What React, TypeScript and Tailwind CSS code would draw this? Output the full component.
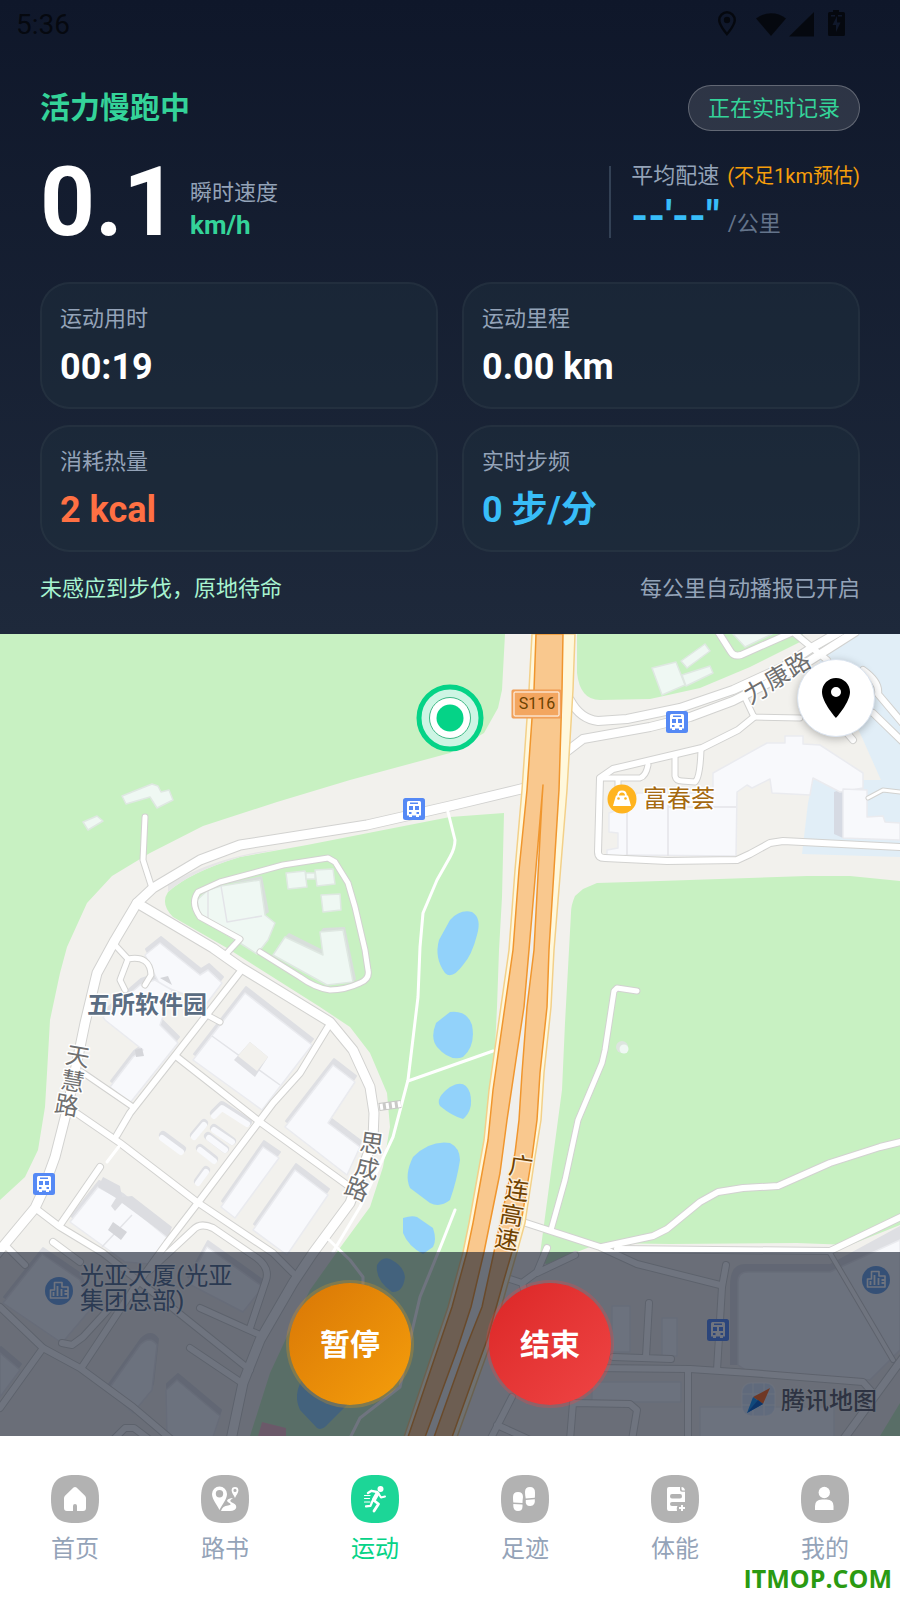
import type { ReactNode } from "react";
import { MdLocationOn } from "react-icons/md";

const metrics = [
  { label: "运动用时", value: "00:19", color: "text-white" },
  { label: "运动里程", value: "0.00 km", color: "text-white" },
  { label: "消耗热量", value: "2 kcal", color: "text-[#ff7043]" },
  { label: "实时步频", value: "0 步/分", color: "text-[#38bdf8]" },
];

function StatusBar() {
  return (
    <div className="flex h-12 items-center justify-between pt-0.5 pl-4 text-black/65">
      <span className="text-[28px] leading-none">5:36</span>
      <svg viewBox="0 0 130 30" className="mr-[54px] h-[30px] w-[130px]" fill="currentColor" aria-hidden="true">
        <path
          fillRule="evenodd"
          d="M11 1a9 9 0 0 1 9 9c0 6-9 16-9 16S2 16 2 10a9 9 0 0 1 9-9Zm0 2.500a6.500 6.500 0 0 0-6.500 6.500c0 3.500 3.500 8.500 6.500 12.300 3-3.800 6.500-8.800 6.500-12.300A6.500 6.500 0 0 0 11 3.500Z"
        />
        <circle cx="11" cy="10" r="3.200" />
        <path d="M40 8.500a24 24 0 0 1 30 0L55 26Z" />
        <path d="M98 2V26.500H73Z" />
        <path
          fillRule="evenodd"
          d="M117 0h6v2h4.500q1.500 0 1.500 1.500v21q0 1.500-1.500 1.500h-14q-1.500 0-1.500-1.500v-21q0-1.500 1.500-1.500h3.500Zm4 6-4.500 9h3.500v7l4.500-9.500h-3.500ZM115 5v1.500h4V5Zm7 0v1.500h4V5Z"
        />
      </svg>
    </div>
  );
}

function Dashboard() {
  return (
    <header className="bg-linear-to-b from-[#0f172a] to-[#1e293b]">
      <StatusBar />
      <div className="px-10 pt-[37px] pb-[29px]">
        <div className="flex h-[46px] items-center justify-between">
          <h1 className="text-[30px] leading-none font-bold text-[#34d399]">活力慢跑中</h1>
          <span className="flex h-full items-center rounded-full border border-white/25 bg-white/12 px-[19px] text-[22px] text-[#34d399]">
            正在实时记录
          </span>
        </div>

        <div className="mt-[35px] flex h-[72px] justify-between">
          <div className="flex gap-3">
            <span className="text-[96px] leading-[72px] font-bold text-white">0.1</span>
            <div className="-mb-px flex flex-col gap-1 self-end">
              <span className="text-[22px] leading-7 text-[#94a3b8]">瞬时速度</span>
              <span className="text-[26px] leading-7 font-bold text-[#34d399]">km/h</span>
            </div>
          </div>
          <div className="flex flex-col gap-1 border-l-2 border-[#334155] pl-5">
            <div className="flex items-center gap-2 leading-5">
              <span className="text-[22px] text-[#94a3b8]">平均配速</span>
              <span className="text-[20px] text-[#f59e0b]">(不足1km预估)</span>
            </div>
            <div className="flex items-baseline gap-2 leading-[52px]">
              <span className="text-[43px] font-bold text-[#38bdf8]">--'--"</span>
              <span className="text-[22px] text-[#64748b]">/公里</span>
            </div>
          </div>
        </div>

        <dl className="mt-11 grid grid-cols-2 gap-x-6 gap-y-4">
          {metrics.map((m) => (
            <div key={m.label} className="rounded-[30px] border-2 border-white/4 bg-[#1e2d3b]/50 px-[18px] pt-[19px] pb-4">
              <dt className="text-[22px] leading-8 text-[#94a3b8]">{m.label}</dt>
              <dd className={`mt-2 text-[36px] leading-[48px] font-bold ${m.color}`}>{m.value}</dd>
            </div>
          ))}
        </dl>

        <div className="mt-[21px] flex justify-between text-[22px] leading-8">
          <span className="text-[#a7f3d0]">未感应到步伐，原地待命</span>
          <span className="text-[#94a3b8]">每公里自动播报已开启</span>
        </div>
      </div>
    </header>
  );
}

const greens = [
  "M0 634H505L502 690 498 708 484 733 450 753 350 780 277 802 203 826 150 853 112 876 87 903 77 925 67 947 60 973 50 1020 47 1073 45 1107 38 1150 25 1177 0 1200Z",
  "M504 813 450 817 307 845 240 857Q190 872 168 892 160 904 173 917L227 948 320 1007 350 1027 370 1053 387 1093 390 1127 383 1167 370 1207 337 1252 310 1290 290 1330 270 1373 250 1436H404L433 1350 450 1307 463 1257 487 1140 493 1090 497 1007 499 950 502 897Z",
  "M577 634V673Q580 700 600 700L650 699 700 688 750 667 800 642 803 634Z",
  "M900 881 850 876H807L630 882 597 883 583 889 575 896Q571 905 571 913L569 950 565 1023 562 1090 553 1157 545 1217 539 1262 547 1264 577 1252 600 1243 670 1244 797 1243 850 1245 900 1225Z",
  "M900 1403 880 1436H900Z",
];

const ponds = [
  "M450 920Q460 909 472 912 482 918 477 935 472 955 463 965 452 980 445 973 434 958 439 940Z",
  "M450 1012Q467 1010 472 1025 476 1046 463 1057 450 1062 437 1047 430 1038 436 1023Z",
  "M450 1087Q465 1078 470 1093 474 1110 463 1119 452 1116 440 1106 435 1098 450 1087Z",
  "M450 1143Q430 1140 413 1157 404 1175 410 1188L430 1203Q440 1208 450 1200 457 1180 460 1160 460 1148 450 1143Z",
  "M403 1218Q412 1215 417 1217L433 1228Q437 1240 433 1247L423 1254Q408 1246 403 1233Z",
  "M377 1265Q382 1256 390 1259 404 1266 405 1277 403 1293 392 1292 375 1280 377 1265Z",
  "M302 1380Q293 1395 300 1410L317 1428Q322 1431 328 1424L347 1405 330 1380Z",
];

const greenBuildings = [
  "M122 796 152 784 158 786 161 792 169 790 173 800 157 808 150 797 126 804Z",
  "M83 822 97 816 103 821 88 830Z",
  "M286 873 305 871 307 887 288 889Z",
  "M306 873H315V879H306Z",
  "M315 870 333 869 335 884 317 886Z",
  "M321 895 340 894 341 910 323 912Z",
  "M197 900 208 890 221 886 260 880 265 915 275 923 268 940 257 954 243 945 200 917Z",
  "M285 937 323 955 320 932 343 930 353 982 327 985 273 955Z",
  "M652 668 676 662 685 685 662 695Z",
  "M682 675 710 666 713 673 686 686Z",
  "M681 661 705 644 710 651 687 668Z",
  "M733 634 745 647 772 634Z",
];

const buildings = [
  "M145 955 160 943 200 975 208 970 222 983 207 1003 160 985Z",
  "M103 1017 140 985 155 980 172 990 160 1025 178 1043 130 1103 110 1087 133 1057 143 1050 105 1020Z",
  "M245 993 312 1045 262 1110 193 1060Z",
  "M333 1065 355 1082 328 1123 360 1147 347 1175 285 1127Z",
  "M263 1147 279 1158 235 1218 221 1207Z",
  "M295 1170 328 1195 287 1255 253 1230Z",
  "M98 1187 117 1197 122 1200 170 1240 150 1264 125 1262 70 1222Z",
  "M207 1247 263 1287 243 1312 187 1283Z",
  "M42 1254 80 1280 90 1310 62 1343 3 1303Z",
  "M140 1345Q150 1335 157 1345L152 1390 133 1413 108 1390Z",
  "M177 1380 220 1416 212 1440H167L166 1390Z",
  "M0 1353 20 1370 0 1397Z",
  "M713 773 767 743H785V736H803V744L820 745 863 773V788L840 792 813 778 810 795 772 793 770 779 752 788 747 785 737 792 736 856 627 855 607 860V850L618 848V833L609 832V813L627 807 637 793H713Z",
  "M843 789 867 790V817L883 816 885 822 900 823V840L843 838Z",
  "M738 1282Q738 1272 748 1272H830L900 1240V1350L870 1380 750 1373 738 1365Z",
  "M612 1306H630V1352H612Z",
  "M662 1318H677V1356H662Z",
  "M592 1382H681V1402H592Z",
  "M700 1407H834V1440H700Z",
];

// [path, width]
const roads: [string, number][] = [
  ["M145 817 143 860 151 885", 5],
  ["M227 953 240 939 200 917Q190 903 198 892L220 882 283 865 328 858 335 862 348 883 355 907 365 950 368 970Q370 979 360 983 345 990 330 990 315 988 300 977L260 952", 5],
  ["M240 972 177 1053 130 1113 117 1135", 6],
  ["M207 1015 220 1022", 5],
  ["M115 945 128 959 120 980 125 990M128 959Q150 955 151 975L145 985", 5],
  ["M82 1072 133 1107", 5],
  ["M72 1110 120 1143 197 1202 273 1253 293 1273", 6],
  ["M177 1057 260 1122 350 1187", 6],
  ["M328 1027 300 1073 273 1103 200 1200 167 1243 133 1290 82 1367", 6],
  ["M35 1208 60 1227 103 1253 150 1290 250 1370", 6],
  ["M60 1225 100 1167", 6],
  ["M150 1270 193 1230Q200 1222 213 1228L257 1258Q270 1268 266 1280L250 1328", 6],
  ["M53 1242 80 1262", 6],
  ["M5 1245 25 1265", 6],
  ["M0 1307 43 1348 80 1368 133 1407 172 1440", 6],
  ["M43 1348 0 1408", 6],
  ["M190 1348 242 1383", 6],
  ["M200 1308 260 1335", 6],
  ["M62 1343 72 1345 83 1337 117 1300", 6],
  ["M113 1440 125 1428H134L150 1440", 6],
  ["M137 903 213 948 240 967 330 1022 353 1050 370 1087 374 1113 373 1140 350 1203 313 1253 293 1283 260 1340 243 1383 231 1440", 9],
  ["M525 788 450 806 367 825 240 845 200 860 153 888 137 903 115 940 97 973 85 1023 67 1110 55 1157 42 1193 35 1208 -10 1262", 9],
  ["M717 630 731 652Q734 657 741 655L793 632 827 660", 6],
  ["M745 698 754 717 800 718", 5],
  ["M754 717 738 730 702 748 613 769 600 778 598 852Q598 858 605 858L667 861 737 860 750 854 770 843 783 841 900 847", 6],
  ["M600 778H640Q646 776 648 765M675 755V776Q676 781 682 781L695 782Q700 778 701 750M618 780V792", 5],
  ["M863 670Q880 682 878 694L905 726M873 713 905 744M847 733 853 740", 6],
  ["M868 798 883 790 900 792", 3],
  ["M570 700Q580 719 598 721L627 719 680 708 733 690 783 667 813 647 860 620", 8],
  ["M566 752 583 739 650 727 690 717 733 701 800 667 855 632", 8],
  ["M637 991 617 988 614 991 605 1050 602 1063 578 1120 565 1180 551 1230", 5],
  ["M523 1222 600 1247 637 1264 720 1285", 6],
  ["M602 1247 653 1236 667 1229 700 1202 718 1192 743 1188 778 1186 830 1163 880 1147 905 1141", 6],
  ["M617 1249 830 1251 905 1215", 6],
  ["M830 1253 893 1360", 4],
  ["M726 1265 722 1287 717 1370", 6],
  ["M590 1368 690 1369 750 1373 863 1382 872 1392", 6],
  ["M905 1355 843 1440", 7],
  ["M688 1370V1440", 6],
  ["M649 1303 646 1357M613 1357 671 1359", 6],
  ["M570 1440 573 1403 630 1404 637 1410 632 1440", 6],
  ["M512 1397 490 1440M497 1425 530 1440", 6],
  ["M547 1248 537 1272 522 1283 507 1278M575 1255 537 1273M522 1283 526 1296", 6],
];

const footpaths = [
  "M447 808 455 840Q455 848 450 857L437 880 423 913 420 947 418 997 408 1080 393 1137 360 1207 333 1252",
  "M408 1081 493 1051",
  "M326 1237 350 1260 363 1277V1284",
  "M455 1210 442 1243 420 1297 413 1327 400 1387 360 1418 349 1440",
  "M107 1162 120 1145",
];

function BusStop({ x, y }: { x: number; y: number }) {
  return (
    <g transform={`translate(${x - 11} ${y - 11})`}>
      <rect width="22" height="22" rx="2.500" fill="#5589f5" />
      <path
        fillRule="evenodd"
        fill="#fff"
        d="M5.500 3h11q1.500 0 1.500 1.500v13H16V19h-3v-1.500H9V19H6v-1.500H4v-13Q4 3 5.500 3ZM7 4.500V6h8V4.500ZM6 8v4h4V8Zm6 0v4h4V8ZM6 14v2h2.500v-2Zm7.500 0v2H16v-2Z"
      />
    </g>
  );
}

function OfficePin({ x, y }: { x: number; y: number }) {
  return (
    <g transform={`translate(${x} ${y})`}>
      <circle r="14" fill="#6fa6e8" />
      <path d="M-8.500 7V-1h4v-7.500H3V-4h6V7Z" fill="none" stroke="#fff" strokeWidth="1.600" />
      <path d="M-5.500 5V1M-1.500 5V-5M2.500 5V-2M5.500 0H9M5.500 3H9" stroke="#fff" strokeWidth="1.800" />
    </g>
  );
}

type Glyph = [char: string, x: number, y: number, angle: number];

function RoadName({ glyphs, fill, halo }: { glyphs: Glyph[]; fill: string; halo: string }) {
  return (
    <g fontSize="24" fill={fill} stroke={halo} strokeWidth="3" paintOrder="stroke" textAnchor="middle">
      {glyphs.map(([char, x, y, angle]) => (
        <text key={char} x="0" y="9" transform={`translate(${x} ${y}) rotate(${angle})`}>
          {char}
        </text>
      ))}
    </g>
  );
}

function MapCanvas() {
  return (
    <svg
      viewBox="0 634 900 802"
      preserveAspectRatio="xMidYMid slice"
      className="absolute inset-0 h-full w-full"
      strokeLinejoin="round"
      role="img"
      aria-label="地图"
    >
      <rect y="600" width="900" height="900" fill="#f2f1ed" />
      <path d="M853 634H900V857L802 854 808 803 813 780H881L860 733 817 657Z" fill="#e1eef7" />
      {greens.map((d) => (
        <path key={d} d={d} fill="#c8f1c2" />
      ))}
      <path d="M168 892Q190 872 240 857L280 849Q215 856 168 885Z" fill="#e6e6e6" />
      {ponds.map((d) => (
        <path key={d} d={d} fill="#92d2fa" />
      ))}
      <path d="M262 1422 286 1428V1440H257Z" fill="#f6bcc8" />

      <g fill="#dedfe3" stroke="#dedfe3" strokeWidth="2">
        {buildings.slice(0, 12).map((d) => (
          <path key={d} d={d} transform="translate(1 -6)" />
        ))}
      </g>
      <path d="M730 1285Q730 1264 745 1264H830L900 1226V1240L830 1272H748L738 1282V1365H730Z" fill="#dedfe3" />
      <path d="M834 792 843 789V838L834 834Z" fill="#d6dae3" />
      <path d="M222 884 262 876 269 912 265 915 260 880ZM285 937 289 933 323 950V955ZM320 932 323 928 345 927 356 979 353 982 343 930Z" fill="#d8dfdb" />
      {greenBuildings.map((d) => (
        <path key={d} d={d} fill="#eff8f3" stroke="#dfe8e2" strokeWidth="1.500" />
      ))}
      {buildings.map((d) => (
        <path key={d} d={d} fill="#f8f9fc" stroke="#eaebef" strokeWidth="1.500" />
      ))}
      <g fill="none" stroke="#e3e4e8" strokeWidth="1.500">
        <path d="M212 1036 280 1085M208 890V918M221 886 227 922 262 916M627 812V855M668 805V856M668 807H736M132 1215 102 1247" />
      </g>
      <path d="M250 1042 268 1057 255 1077 234 1060Z" fill="#dedfe3" />
      <path d="M250 1042 268 1057 257 1071 238 1056Z" fill="#f2f1ed" />
      <path d="M108 1230 113 1222 127 1232 121 1240ZM135 1050 142 1048 144 1056 136 1057ZM160 978 168 976 172 985Z" fill="#d5d6da" />
      <path d="M103 1177 120 1186 122 1197 132 1196 172 1227 168 1237 122 1203 115 1211 111 1206 116 1198 98 1187Z" fill="#dcdde1" />
      {/* prefab huts */}
      <g fill="none" strokeLinecap="round">
        <path d="M163 1135 182 1149M194 1135 204 1123M200 1148 214 1159M208 1136 225 1149M214 1128 232 1141M198 1181 206 1170M214 1113 222 1105 248 1122" stroke="#dedfe3" strokeWidth="8" />
        <path d="M162 1138 181 1152M194 1137 204 1125M200 1150 214 1161M209 1138 225 1150M214 1130 232 1142M198 1183 206 1172M214 1116 222 1108 247 1124" stroke="#f8f9fc" strokeWidth="6" />
      </g>
      <circle cx="622" cy="1047" r="6" fill="#dde5df" />
      <circle cx="624" cy="1049" r="4.500" fill="#eff8f3" />

      <g fill="none" strokeLinecap="round">
        {roads.map(([d, w]) => (
          <path key={d} d={d} stroke="#d2d2d0" strokeWidth={w + 2} />
        ))}
        {roads.map(([d, w]) => (
          <path key={d} d={d} stroke="#fff" strokeWidth={w} />
        ))}
        {footpaths.map((d) => (
          <path key={d} d={d} stroke="#fff" strokeWidth="3" />
        ))}
      </g>
      <path d="M379 1107 401 1104" stroke="#c9c9c7" strokeWidth="8" />
      <path d="M380 1107 401 1104" stroke="#fff" strokeWidth="6" strokeDasharray="3 3" />

      {/* S116 expressway */}
      <path
        d="M532 634 529 690 522 790 515 870 509 950 489 1090 484 1140 469 1223 463 1252 448 1307 430 1360 403 1440H456L480 1373 492 1340 508 1283 517 1252 525 1223 535 1157 541 1120 544 1073 551 1007 554 950 567 790 573 690 575 634Z"
        fill="#fff8dc"
        stroke="#f3d089"
        strokeWidth="1.500"
      />
      <path
        d="M536 634 534 690 527 790 519 870 513 950 493 1090 488 1140 473 1223 467 1252 452 1307 434 1360 407 1440H451L475 1373 487 1340 503 1283 512 1252 521 1223 532 1157 537 1120 540 1073 547 1007 549 950 559 790 562 690 563 634Z"
        fill="#f9c88e"
        stroke="#f0962e"
        strokeWidth="1.500"
      />
      <path
        d="M543 785 529 950 524 1007 517 1053 507 1120 500 1173 484 1252 471 1307 457 1350 424 1440H433L465 1350 482 1307 494 1252 515 1153 519 1120 522 1073 527 1007 534 950 542 800Z"
        fill="#f0efec"
        stroke="#f0962e"
        strokeWidth="1.500"
      />

      <g stroke="#fff">
        <rect x="512" y="690" width="49" height="28" rx="1" fill="#f3a660" stroke="#ee9a52" />
        <rect x="514" y="692" width="45" height="24" rx="1" fill="#f3a660" />
      </g>
      <text x="537" y="709" fontSize="16" textAnchor="middle" fill="#6b4200">
        S116
      </text>

      <BusStop x={414} y={809} />
      <BusStop x={677} y={722} />
      <BusStop x={44} y={1184} />
      <BusStop x={718} y={1330} />
      <OfficePin x={59} y={1291} />
      <OfficePin x={876} y={1280} />
      <g transform="translate(622 799)">
        <circle r="14.500" fill="#ffb41f" />
        <path d="M-6-3.500H6Q8 3 9 7H-9Q-8 3-6-3.500Z" fill="#fff" />
        <path d="M-4-3Q-4-7.500 0-7.500T4-3" fill="none" stroke="#fff" strokeWidth="1.800" />
        <circle cx="-3.500" cy="-.5" r="1.300" fill="#ffb41f" />
        <circle cx="3.500" cy="-.5" r="1.300" fill="#ffb41f" />
      </g>

      <g fontSize="24" stroke="#fff" strokeWidth="3" paintOrder="stroke">
        <text x="643" y="807" fill="#a5690f">
          富春荟
        </text>
        <text x="87" y="1013" fill="#5b6d82" fontWeight="700">
          五所软件园
        </text>
        <g fill="#556e8e" strokeOpacity=".5">
          <text x="80" y="1284">光亚大厦(光亚</text>
          <text x="80" y="1309">集团总部)</text>
        </g>
      </g>
      <RoadName
        fill="#6f6f6f"
        halo="#fff"
        glyphs={[["力", 756, 691, -30], ["康", 777, 677, -30], ["路", 798, 664, -30]]}
      />
      <RoadName
        fill="#6f6f6f"
        halo="#fff"
        glyphs={[["天", 78, 1056, 10], ["慧", 73, 1081, 10], ["路", 67, 1105, 10]]}
      />
      <RoadName
        fill="#6f6f6f"
        halo="#fff"
        glyphs={[["思", 372, 1143, 8], ["成", 367, 1168, 14], ["路", 357, 1189, 20]]}
      />
      <RoadName
        fill="#704200"
        halo="#fdeeda"
        glyphs={[["广", 521, 1166, 8], ["连", 517, 1190, 8], ["高", 512, 1215, 10], ["速", 507, 1239, 10]]}
      />

      {/* current position */}
      <circle cx="450" cy="718" r="31" fill="#cdf5e4" stroke="#05d387" strokeWidth="5" />
      <circle cx="450" cy="718" r="20.500" fill="#fff" stroke="#3fb886" strokeWidth="1" />
      <circle cx="450" cy="718" r="13.500" fill="#05d387" />

      {/* map provider mark */}
      <rect x="742" y="1383" width="33" height="33" rx="9" fill="#cfe3fb" fillOpacity=".7" stroke="#fff" strokeOpacity=".5" strokeWidth="1.500" />
      <path d="M753 1383V1416M764 1383V1416M742 1394H775M742 1405H775" stroke="#fff" strokeOpacity=".5" strokeWidth="1.500" />
      <path d="M770 1388 753 1397 763 1404Z" fill="#ff6a1f" />
      <path d="M747 1413 753 1397 763 1404Z" fill="#1591f5" />
      <path d="M747 1413 758 1400 763 1404Z" fill="#0a60c8" />
      <text x="781" y="1409" fontSize="24" fontWeight="500" fill="#5c5e66" stroke="#fff" strokeOpacity=".4" strokeWidth="2" paintOrder="stroke">
        腾讯地图
      </text>
    </svg>
  );
}

function TrackMap() {
  return (
    <main className="relative flex min-h-[600px] flex-1 flex-col justify-end overflow-hidden">
      <MapCanvas />
      <button
        type="button"
        aria-label="定位"
        className="absolute top-[25px] right-[25px] flex size-[78px] items-center justify-center rounded-full border border-[#dbe4f0] bg-white shadow-[0_2px_8px_rgba(0,0,0,0.25)]"
      >
        <MdLocationOn className="size-12 text-black" />
      </button>
      <div className="relative flex justify-center gap-[72px] bg-[#0f172a]/60 py-7">
        <button
          type="button"
          className="size-32 rounded-full border-3 border-[#f59e0b]/25 bg-linear-135 from-[#d97706] to-[#f59e0b] bg-clip-padding text-[30px] font-bold text-white"
        >
          暂停
        </button>
        <button
          type="button"
          className="size-32 rounded-full border-3 border-[#ef4444]/30 bg-linear-135 from-[#dc2626] to-[#ef4444] bg-clip-padding text-[30px] font-bold text-white"
        >
          结束
        </button>
      </div>
    </main>
  );
}

const HomeGlyph = (
  <path d="M22.500 12.600q1.500-1.300 3 0l8.500 8.200q1 1 1 2.500v9.700q0 3-3 3h-6v-5q0-2-2-2t-2 2v5h-6q-3 0-3-3v-9.700q0-1.500 1-2.500Z" />
);

const RouteGlyph = (
  <>
    <path
      fillRule="evenodd"
      d="M18.500 11.500a7.500 7.500 0 0 1 7.500 7.500c0 5-5 11-7.500 16C16 30 11 24 11 19a7.500 7.500 0 0 1 7.500-7.500Zm0 3.500a3.700 3.700 0 1 0 0 7.400 3.700 3.700 0 0 0 0-7.400Z"
    />
    <path
      fillRule="evenodd"
      d="M34 12a3.400 3.400 0 0 1 3.400 3.400C37.400 18 35 20 34 23c-1-3-3.400-5-3.400-7.600A3.400 3.400 0 0 1 34 12Zm0 1.800a1.600 1.600 0 1 0 0 3.200 1.600 1.600 0 0 0 0-3.200Z"
    />
    <path d="M32 23c-6 .5-7.500 3-4 4.800 2.500 1.300 2 2.300-1 2.800-3.500.5-6 2-7 5.400H29c7.500 0 8-6 3-8-3-1.200-4-2.500 0-5Z" />
  </>
);

const RunGlyph = (
  <>
    <circle cx="29.500" cy="14" r="3" />
    <g fill="none" stroke="#fff" strokeLinecap="round" strokeLinejoin="round">
      <path d="M17 18 20.500 15.800 26 17" strokeWidth="2.400" />
      <path d="M26.500 18.500 23 24.500" strokeWidth="4.200" />
      <path d="M27.500 18.500 30 22.500 34 21.500" strokeWidth="2" />
      <path d="M23 25.500 27.500 29 23 36" strokeWidth="2.800" />
      <path d="M21.500 26 19.500 30.800 15 31.300" strokeWidth="2.200" />
      <path d="M13.500 20.500H19M13.500 23.500H18.500M13.500 27H19" strokeWidth="1.200" />
    </g>
  </>
);

const FeetGlyph = (
  <path d="M12 22q0-5 5-5t5 5q-.5 3-.5 6L12.300 27.500Q12 25 12 22ZM12.300 29l9.200.5v2q0 4.500-4.500 4.500t-4.700-5ZM24 17q0-5 5-5t5 5.500-.3 5.300l-9 .7Q24 20 24 17Zm.8 8 9-.7q.8 6.500-4.500 6.700T24.800 25Z" />
);

const FitnessGlyph = (
  <path
    fillRule="evenodd"
    d="M18 12h11v3q0 1.800 2 1.800h3V27H21q-2 0-2 2t2 2h5.500q-1.500 2-.5 5h-8q-2 0-2-2V14q0-2 2-2Zm3 7q-2 0-2 2.300t2 2.300h8q2 0 2-2.300T29 19ZM30.500 12q3 0 3.500 3.500h-2q-1.500 0-1.500-1.500ZM30 30h2v2h2v2h-2v2h-2v-2h-2v-2h2Z"
  />
);

const UserGlyph = (
  <>
    <circle cx="23.300" cy="17.500" r="5.700" />
    <path d="M14 35v-4q0-6.500 7-6.500h4.500q7 0 7 6.500v4Z" />
  </>
);

const tabs: { label: string; glyph: ReactNode; active?: boolean }[] = [
  { label: "首页", glyph: HomeGlyph },
  { label: "路书", glyph: RouteGlyph },
  { label: "运动", glyph: RunGlyph, active: true },
  { label: "足迹", glyph: FeetGlyph },
  { label: "体能", glyph: FitnessGlyph },
  { label: "我的", glyph: UserGlyph },
];

function TabBar() {
  return (
    <nav className="relative grid grid-cols-6 bg-white pt-[39px] pb-[35px]">
      {tabs.map((tab) => (
        <a
          key={tab.label}
          href="#"
          aria-current={tab.active ? "page" : undefined}
          className={`flex flex-col items-center gap-2.5 ${tab.active ? "text-[#05d387]" : "text-[#94a3b8]"}`}
        >
          <svg viewBox="0 0 48 48" className="size-12" aria-hidden="true">
            <path
              d="M24 0C41.500 0 48 6.500 48 24S41.500 48 24 48 0 41.500 0 24 6.500 0 24 0Z"
              fill={tab.active ? "#1cd697" : "#b2b2b2"}
            />
            <g fill="#fff">{tab.glyph}</g>
          </svg>
          <span className="text-[24px] leading-8">{tab.label}</span>
        </a>
      ))}
      <span className="absolute right-2 bottom-2 font-['Open_Sans',sans-serif] text-[25px] leading-7 font-bold text-[#2a9a12]">
        ITMOP.COM
      </span>
    </nav>
  );
}

export default function App() {
  return (
    <div className="flex min-h-screen flex-col font-['Roboto','Noto_Sans_CJK_SC',sans-serif]">
      <Dashboard />
      <TrackMap />
      <TabBar />
    </div>
  );
}
